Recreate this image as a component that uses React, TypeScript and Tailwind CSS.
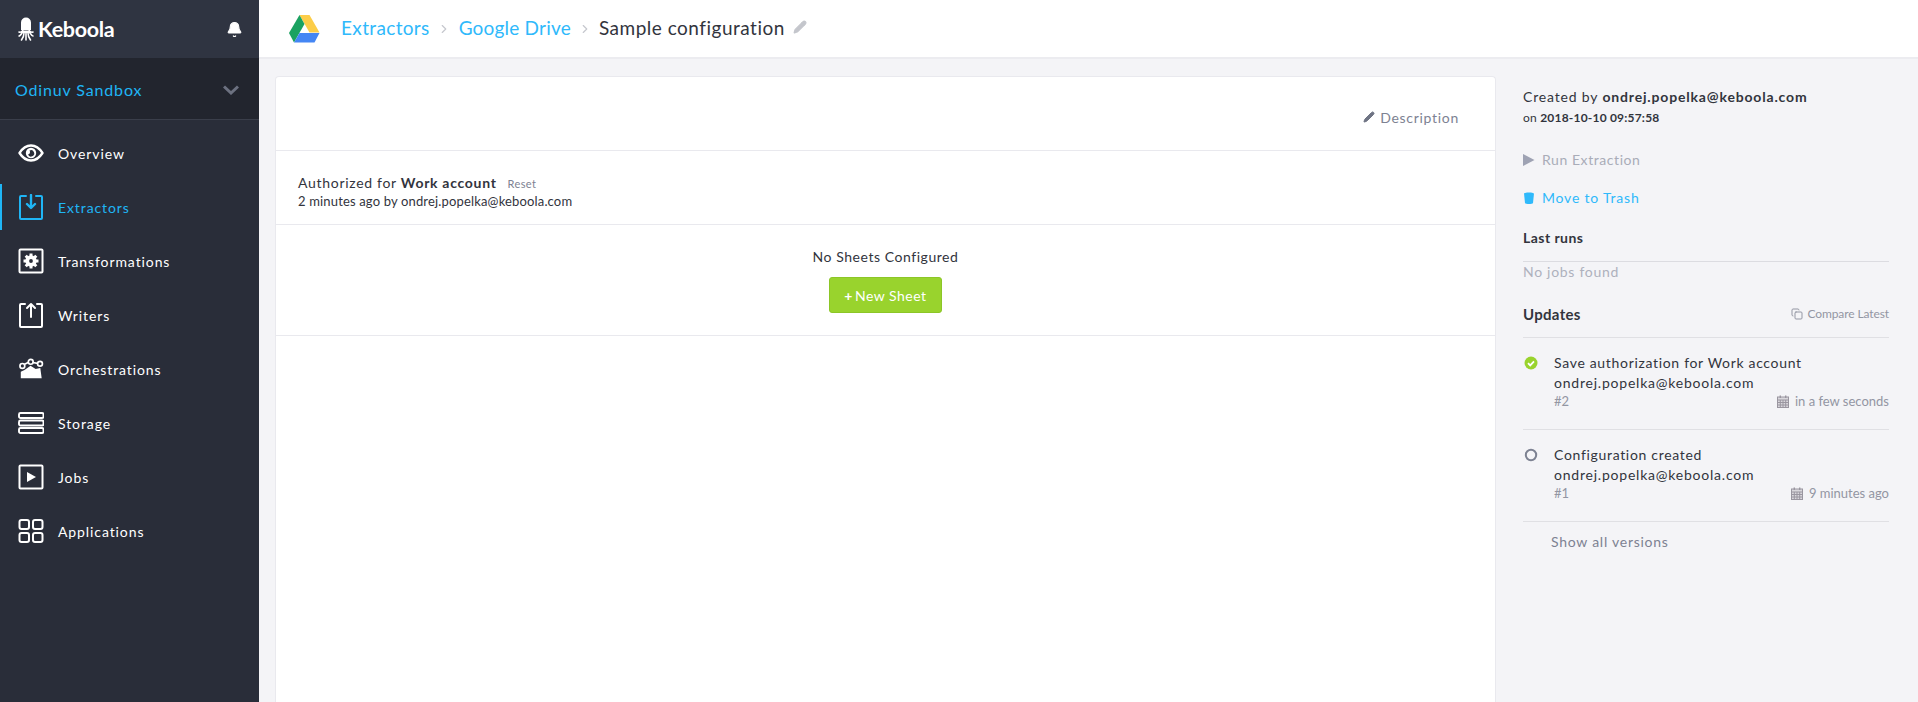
import { Bell, ChevronRight, Pencil, Copy } from "lucide-react";
import type { ReactNode } from "react";

const font = "font-['Lato','Open_Sans',sans-serif]";

function Octopus() {
  return (
    <svg width="16" height="25" viewBox="0 0 16 25" fill="none" stroke="#fff" strokeWidth="1.6" strokeLinecap="round">
      <path d="M3 13V5.500a5 5 0 0 1 10 0V13z" fill="#fff" stroke="none" />
      <path d="M5 13c-1 2-2.5 2.5-4 2M11 13c1 2 2.5 2.5 4 2M4 16c-1 1.500-2 3-3 3M12 16c1 1.500 2 3 3 3M6 16c0 3-1 5-2.500 7M10 16c0 3 1 5 2.500 7M8 16v7" />
      <path d="M4 13.500h8v2.500H4z" fill="#fff" stroke="none" />
    </svg>
  );
}

function DriveLogo() {
  return (
    <svg width="31" height="28" viewBox="0 0 31 28">
      <path d="M10.500 0h10l10 17.500h-10z" fill="#fccd48" />
      <path d="M10.500 0L0 18l5 9.500L15.500 9z" fill="#1ba261" />
      <path d="M10.500 18h20l-5 9.500H5z" fill="#4486f4" />
    </svg>
  );
}

function Frame({ children }: { children: ReactNode }) {
  return (
    <svg width="26" height="26" viewBox="0 0 26 26" fill="none" stroke="currentColor" strokeWidth="2" strokeLinecap="round" strokeLinejoin="round">
      {children}
    </svg>
  );
}

function CalendarIcon() {
  return (
    <svg width="12" height="13" viewBox="0 0 12 13" fill="none" stroke="#9a96a0" strokeWidth="1">
      <rect x="0.500" y="2" width="11" height="10.500" fill="#d9d7dc" />
      <path d="M0.500 5h11M0.500 7.500h11M0.500 10h11M3.300 5v7.500M6 5v7.500M8.700 5v7.500" />
      <path d="M3.300 0.500v2.500M8.700 0.500v2.500" strokeWidth="1.400" />
    </svg>
  );
}

const navItems: { label: string; icon: ReactNode; active?: boolean }[] = [
  {
    label: "Overview",
    icon: (
      <Frame>
        <path d="M1.500 13C5 7.500 9 5.500 13 5.500s8 2 11.500 7.500C21 18.500 17 20.500 13 20.500S5 18.500 1.500 13z" strokeWidth="2.400" />
        <circle cx="13" cy="13" r="5.200" fill="currentColor" stroke="none" />
        <path d="M11.500 10.500a3.200 3.200 0 1 1-1.500 4 2.500 2.500 0 0 0 1.500-4z" fill="#292d39" stroke="none" />
      </Frame>
    ),
  },
  {
    label: "Extractors",
    active: true,
    icon: (
      <Frame>
        <path d="M8 2H3a1 1 0 0 0-1 1v21a1 1 0 0 0 1 1h20a1 1 0 0 0 1-1V3a1 1 0 0 0-1-1h-5" />
        <path d="M13 1v12M9 10l4 4 4-4" strokeWidth="2.400" />
      </Frame>
    ),
  },
  {
    label: "Transformations",
    icon: (
      <Frame>
        <rect x="1.500" y="1.500" width="23" height="23" rx="1" />
        <circle cx="13" cy="13" r="3.800" strokeWidth="3.800" />
        <path d="M13 5.500v3M13 17.500v3M5.500 13h3M17.500 13h3M7.700 7.700l2 2M16.300 16.300l2 2M18.300 7.700l-2 2M9.700 16.300l-2 2" strokeWidth="3" strokeLinecap="butt" />
      </Frame>
    ),
  },
  {
    label: "Writers",
    icon: (
      <Frame>
        <path d="M7 2H3a1 1 0 0 0-1 1v21a1 1 0 0 0 1 1h20a1 1 0 0 0 1-1V3a1 1 0 0 0-1-1h-4" />
        <path d="M13 15V2M9 6l4-4 4 4" />
      </Frame>
    ),
  },
  {
    label: "Orchestrations",
    icon: (
      <svg width="28" height="26" viewBox="0 0 28 24" fill="none" stroke="currentColor" strokeWidth="1.800">
        <path d="M3 22v-7l4-2 6.500-4.500L19 12l5-1 1.500 11z" fill="currentColor" stroke="none" />
        <path d="M7 7l4-2M16 5l5 1" />
        <circle cx="4.700" cy="8.700" r="2.600" fill="#292d39" />
        <circle cx="13.700" cy="4.300" r="2.600" fill="#292d39" />
        <circle cx="23.700" cy="6.300" r="2.600" fill="#292d39" />
      </svg>
    ),
  },
  {
    label: "Storage",
    icon: (
      <svg width="26" height="26" viewBox="0 0 26 26" fill="none" stroke="currentColor" strokeWidth="1.900">
        <rect x="1" y="3" width="24.500" height="5" rx="1.500" />
        <rect x="1" y="10.500" width="24.500" height="5" rx="1.500" />
        <rect x="1" y="18" width="24.500" height="5" rx="1.500" />
      </svg>
    ),
  },
  {
    label: "Jobs",
    icon: (
      <Frame>
        <rect x="1.500" y="1.500" width="23" height="23" rx="1" />
        <path d="M9 8l9 5-9 5z" fill="currentColor" stroke="none" />
      </Frame>
    ),
  },
  {
    label: "Applications",
    icon: (
      <Frame>
        <rect x="1.500" y="2" width="9.500" height="9" rx="2" />
        <rect x="15" y="2" width="9.500" height="9" rx="2" />
        <rect x="1.500" y="15" width="9.500" height="9" rx="2" />
        <rect x="15" y="15" width="9.500" height="9" rx="2" />
      </Frame>
    ),
  },
];

function Sidebar() {
  return (
    <aside className="w-[259px] shrink-0 bg-[#292d39] text-white">
      <div className="flex h-[58px] items-center justify-between bg-[#2f3441] pl-[18px] pr-[16px]">
        <div className="flex items-center gap-[4px]">
          <Octopus />
          <span className="text-[21.5px] font-bold tracking-[-0.3px]">Keboola</span>
        </div>
        <Bell size={17} fill="#fff" strokeWidth={1.500} />
      </div>
      <div className="flex h-[62px] items-center justify-between border-b border-[#3a3e4a] bg-[#22252e] pl-[15px] pr-[20px] pt-[2px]">
        <span className="text-[16px] tracking-[0.85px] text-[#1fb5f5]">Odinuv Sandbox</span>
        <svg width="16" height="10" viewBox="0 0 16 10" fill="none" stroke="#6c7180" strokeWidth="3">
          <path d="M1 1.500l7 6.500 7-6.500" />
        </svg>
      </div>
      <nav className="pt-[10px]">
        {navItems.map((item) => (
          <div
            key={item.label}
            className={`mb-[8px] flex h-[46px] items-center gap-[14px] border-l-2 pl-[16px] text-[14px] tracking-[0.9px] ${
              item.active ? "border-[#1fb5f5] text-[#1fb5f5]" : "border-transparent text-white"
            }`}
          >
            <span className="flex w-[26px] justify-center">{item.icon}</span>
            <span>{item.label}</span>
          </div>
        ))}
      </nav>
    </aside>
  );
}

function Header() {
  return (
    <header className="flex h-[59px] shrink-0 items-center border-b-2 border-[#ececf0] bg-white pl-[30px]">
      <DriveLogo />
      <div className="flex items-center pl-[21px] text-[19px] tracking-[0.35px]">
        <span className="text-[#2fb9fb]">Extractors</span>
        <ChevronRight size={14} className="mx-[7.5px] text-[#c6c8ce]" />
        <span className="tracking-[0.2px] text-[#2fb9fb]">Google Drive</span>
        <ChevronRight size={14} className="mx-[7px] text-[#c6c8ce]" />
        <span className="tracking-[0.5px] text-[#32343d]">Sample configuration</span>
        <Pencil size={14} fill="#c4c6cc" className="ml-[8px] -translate-y-[2px] text-[#c4c6cc]" />
      </div>
    </header>
  );
}

function MainCard() {
  return (
    <section className="h-full w-[1221px] shrink-0 rounded-t-[4px] border-x border-t border-[#e9e9ee] bg-white text-[#32343d]">
      <div className="flex h-[74px] items-center justify-end border-b border-[#e9e9ee] pr-[36px] pt-[7px] text-[14px] tracking-[0.7px] text-[#7d8292]">
        <Pencil size={12} fill="#6f7484" className="mr-[5px] text-[#6f7484]" />
        Description
      </div>
      <div className="flex h-[74px] flex-col justify-center border-b border-[#e9e9ee] pl-[22px] pt-[8px]">
        <div className="text-[14px] leading-[18px] tracking-[0.7px]">
          Authorized for <b className="font-bold">Work account</b>
          <span className="ml-[11px] text-[11px] tracking-[0.4px] text-[#7d8292]">Reset</span>
        </div>
        <div className="text-[13px] leading-[17px] tracking-[0.16px]">2 minutes ago by ondrej.popelka@keboola.com</div>
      </div>
      <div className="flex h-[111px] flex-col items-center border-b border-[#e9e9ee] pt-[23px]">
        <div className="text-[14px] leading-[18px] tracking-[0.55px]">No Sheets Configured</div>
        <button className="mt-[11px] flex h-[36px] w-[113px] items-center justify-center rounded-[3px] border border-[#8cc627] bg-[#99d32d] text-[14px] tracking-[0.5px] text-white">
          <span className="mr-[2px] font-bold">+</span>
          New Sheet
        </button>
      </div>
    </section>
  );
}

function Version({ title, num, when, done }: { title: string; num: string; when: string; done?: boolean }) {
  return (
    <div className="flex h-[92px] border-b border-[#e0e0e4] pt-[15px]">
      <div className="w-[31px] pl-[1px] pt-[3px]">
        {done ? (
          <svg width="14" height="14" viewBox="0 0 14 14" fill="none">
            <circle cx="7" cy="7" r="6.500" fill="#99d32d" />
            <path d="M4 7.200l2.200 2.200L10 5.400" stroke="#fff" strokeWidth="1.800" />
          </svg>
        ) : (
          <svg width="14" height="14" viewBox="0 0 14 14" fill="none">
            <circle cx="7" cy="7" r="5.200" stroke="#7d8292" strokeWidth="2" />
          </svg>
        )}
      </div>
      <div className="flex-1">
        <div className="text-[14px] leading-[20px] tracking-[0.68px] text-[#32343d]">{title}</div>
        <div className="text-[14px] leading-[20px] tracking-[0.78px] text-[#32343d]">ondrej.popelka@keboola.com</div>
        <div className="flex items-center justify-between text-[13px] leading-[16px] text-[#9396a3]">
          <span>{num}</span>
          <span className="flex items-center gap-[6px]">
            <CalendarIcon />
            {when}
          </span>
        </div>
      </div>
    </div>
  );
}

function RightPanel() {
  return (
    <aside className="w-[366px] shrink-0 pt-[11px] text-[#32343d]">
      <div className="text-[14px] leading-[20px] tracking-[0.83px]">
        Created by <b className="font-bold">ondrej.popelka@keboola.com</b>
      </div>
      <div className="pt-[1px] text-[12px] leading-[20px] tracking-[0.2px]">
        on <b className="font-bold">2018-10-10 09:57:58</b>
      </div>
      <div className="mt-[22px] flex items-center gap-[7px] text-[14px] leading-[20px] tracking-[0.57px] text-[#a9acb8]">
        <svg width="12" height="12" viewBox="0 0 12 12">
          <path d="M0 0l11.500 6L0 12z" fill="#9ea2b3" />
        </svg>
        Run Extraction
      </div>
      <div className="mt-[18px] flex items-center gap-[7px] text-[14px] leading-[20px] tracking-[0.8px] text-[#2fb9fb]">
        <svg width="12" height="12" viewBox="0 0 12 12">
          <path d="M1 1.500C2 0 10 0 11 1.500L10 11c-.5 1.300-7.500 1.300-8 0z" fill="#2fb9fb" />
        </svg>
        Move to Trash
      </div>
      <div className="mt-[20px] border-b border-[#dcdce1] pb-[13px] text-[14px] font-bold leading-[20px] tracking-[0.45px]">Last runs</div>
      <div className="text-[14px] leading-[20px] tracking-[0.7px] text-[#aeb1bd]">No jobs found</div>
      <div className="mt-[22px] flex items-center justify-between border-b border-[#e0e0e4] pb-[13px] leading-[20px]">
        <b className="text-[15px] font-bold tracking-[0.3px]">Updates</b>
        <span className="flex items-center gap-[4px] text-[12px] tracking-[-0.1px] text-[#9396a3]">
          <Copy size={12} />
          Compare Latest
        </span>
      </div>
      <Version title="Save authorization for Work account" num="#2" when="in a few seconds" done />
      <Version title="Configuration created" num="#1" when="9 minutes ago" />
      <div className="pl-[28px] pt-[10px] text-[14px] leading-[20px] tracking-[0.75px] text-[#7d8292]">Show all versions</div>
    </aside>
  );
}

export default function App() {
  return (
    <div className={`flex h-[702px] w-[1918px] overflow-hidden bg-[#f4f4f7] ${font}`}>
      <Sidebar />
      <main className="flex min-w-0 flex-1 flex-col">
        <Header />
        <div className="flex flex-1 gap-[27px] overflow-hidden pl-[16px] pt-[17px]">
          <MainCard />
          <RightPanel />
        </div>
      </main>
    </div>
  );
}
